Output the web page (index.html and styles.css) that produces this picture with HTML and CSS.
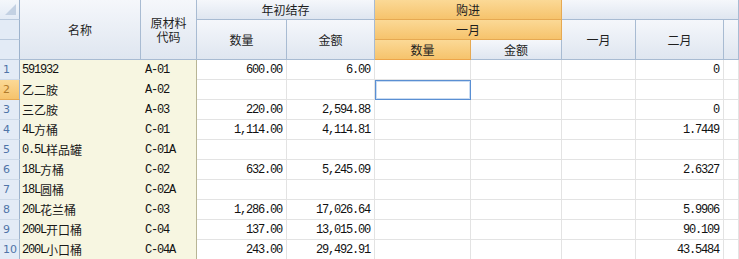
FILE: index.html
```html
<!DOCTYPE html>
<html>
<head>
<meta charset="utf-8">
<link rel="stylesheet" href="styles.css">
</head>
<body>
<div class="sheet">
  <!-- header row 1 -->
  <div class="h rh corner"></div>
  <div class="h r3 hc">名称</div>
  <div class="h r3 hc two"><span class="ln">原材料</span><span class="ln">代码</span></div>
  <div class="h c2">年初结存</div>
  <div class="h c2 sel">购进</div>
  <div class="h c3 band"></div>
  <!-- header row 2 -->
  <div class="h rh"></div>
  <div class="h r2">数量</div>
  <div class="h r2">金额</div>
  <div class="h c2 sel">一月</div>
  <div class="h r2">一月</div>
  <div class="h r2">二月</div>
  <div class="h r2"></div>
  <!-- header row 3 -->
  <div class="h rh"></div>
  <div class="h sel selb">数量</div>
  <div class="h">金额</div>

  <!-- row 1 -->
  <div class="rn">1</div><div class="nm"><span class="m">591932</span></div><div class="cd m">A-01</div>
  <div class="d m">600.00</div><div class="d m">6.00</div><div class="d"></div><div class="d"></div><div class="d"></div><div class="d m">0</div><div class="d"></div>
  <!-- row 2 -->
  <div class="rn act">2</div><div class="nm">乙二胺</div><div class="cd m">A-02</div>
  <div class="d"></div><div class="d"></div><div class="d cur"></div><div class="d"></div><div class="d"></div><div class="d"></div><div class="d"></div>
  <!-- row 3 -->
  <div class="rn">3</div><div class="nm">三乙胺</div><div class="cd m">A-03</div>
  <div class="d m">220.00</div><div class="d m">2,594.88</div><div class="d"></div><div class="d"></div><div class="d"></div><div class="d m">0</div><div class="d"></div>
  <!-- row 4 -->
  <div class="rn">4</div><div class="nm"><span class="m">4L</span>方桶</div><div class="cd m">C-01</div>
  <div class="d m">1,114.00</div><div class="d m">4,114.81</div><div class="d"></div><div class="d"></div><div class="d"></div><div class="d m">1.7449</div><div class="d"></div>
  <!-- row 5 -->
  <div class="rn">5</div><div class="nm"><span class="m">0.5L</span>样品罐</div><div class="cd m">C-01A</div>
  <div class="d"></div><div class="d"></div><div class="d"></div><div class="d"></div><div class="d"></div><div class="d"></div><div class="d"></div>
  <!-- row 6 -->
  <div class="rn">6</div><div class="nm"><span class="m">18L</span>方桶</div><div class="cd m">C-02</div>
  <div class="d m">632.00</div><div class="d m">5,245.09</div><div class="d"></div><div class="d"></div><div class="d"></div><div class="d m">2.6327</div><div class="d"></div>
  <!-- row 7 -->
  <div class="rn">7</div><div class="nm"><span class="m">18L</span>圆桶</div><div class="cd m">C-02A</div>
  <div class="d"></div><div class="d"></div><div class="d"></div><div class="d"></div><div class="d"></div><div class="d"></div><div class="d"></div>
  <!-- row 8 -->
  <div class="rn">8</div><div class="nm"><span class="m">20L</span>花兰桶</div><div class="cd m">C-03</div>
  <div class="d m">1,286.00</div><div class="d m">17,026.64</div><div class="d"></div><div class="d"></div><div class="d"></div><div class="d m">5.9906</div><div class="d"></div>
  <!-- row 9 -->
  <div class="rn">9</div><div class="nm"><span class="m">200L</span>开口桶</div><div class="cd m">C-04</div>
  <div class="d m">137.00</div><div class="d m">13,015.00</div><div class="d"></div><div class="d"></div><div class="d"></div><div class="d m">90.109</div><div class="d"></div>
  <!-- row 10 -->
  <div class="rn">10</div><div class="nm"><span class="m">200L</span>小口桶</div><div class="cd m">C-04A</div>
  <div class="d m">243.00</div><div class="d m">29,492.91</div><div class="d"></div><div class="d"></div><div class="d"></div><div class="d m">43.5484</div><div class="d"></div>
</div>
</body>
</html>
```
FILE: styles.css
```css
html, body {
  margin: 0;
  padding: 0;
  background: #ffffff;
  overflow: hidden;
}

.sheet {
  display: grid;
  grid-template-columns: 20px 121px 56px 90px 88px 96px 91px 74px 88px 15px;
  grid-template-rows: repeat(13, 20px);
  width: 739px;
  overflow: hidden;
  font-family: "Noto Sans CJK SC", "Liberation Sans", sans-serif;
  font-size: 12px;
  color: #1a1a1a;
}

.sheet > div {
  box-sizing: border-box;
  display: flex;
  align-items: center;
  white-space: nowrap;
  overflow: hidden;
  line-height: 14px;
}

/* header cells */
.h {
  justify-content: center;
  text-align: center;
  background: linear-gradient(#f5f7fb, #dfe6f0);
  border-right: 1px solid #a8bbd2;
  border-bottom: 1px solid #a8bbd2;
  color: #1e1e1e;
}

.r2 { grid-row: span 2; }
.r3 { grid-row: span 3; }
.c2 { grid-column: span 2; }
.c3 { grid-column: span 3; }

.sheet > .two {
  flex-direction: column;
  justify-content: center;
  gap: 0;
}

.ln {
  display: block;
  line-height: 14px;
  height: 14px;
}

.sel {
  background: linear-gradient(#fbd996, #f6c36c);
  border-right-color: #e6a952;
  border-bottom-color: #e6a952;
}

.selb { border-bottom: 1px solid #eda54a; }

.rh {
  background: #e3ebf6;
  border-right-color: #9db3cd;
  border-bottom-color: #b9c9dd;
}

.corner {
  position: relative;
  background: linear-gradient(#f4f7fb, #e3ebf6);
}

.corner::after {
  content: "";
  position: absolute;
  right: 3px;
  bottom: 4px;
  width: 0;
  height: 0;
  border-left: 11px solid transparent;
  border-bottom: 11px solid #c3d1e3;
}

/* row numbers */
.rn {
  background: #e3ebf6;
  border-right: 1px solid #9db3cd;
  border-bottom: 1px solid #cfdbe9;
  padding-left: 3px;
  color: #4f74a8;
  font-family: "DejaVu Sans", sans-serif;
  font-size: 11px;
}

.rn.act {
  background: linear-gradient(#fbd996, #f6c36c);
  color: #b07a2a;
  border-bottom-color: #e6a952;
}

/* frozen text columns */
.nm {
  background: #f7f6e1;
  padding-left: 2px;
}

.cd {
  background: #f7f6e1;
  padding-left: 4px;
  border-right: 1px solid #b8b595;
}

/* data cells */
.d {
  justify-content: flex-end;
  padding-right: 4px;
  background: #ffffff;
  border-right: 1px solid #e3e3e3;
  border-bottom: 1px solid #e3e3e3;
}

.m {
  font-family: "Liberation Mono", monospace;
  font-size: 12px;
  letter-spacing: -1.2px;
  color: #111111;
}

.cur {
  border: 1px solid #5a8fd3;
  box-shadow: inset 0 0 0 1px #cadcf2;
}
```
